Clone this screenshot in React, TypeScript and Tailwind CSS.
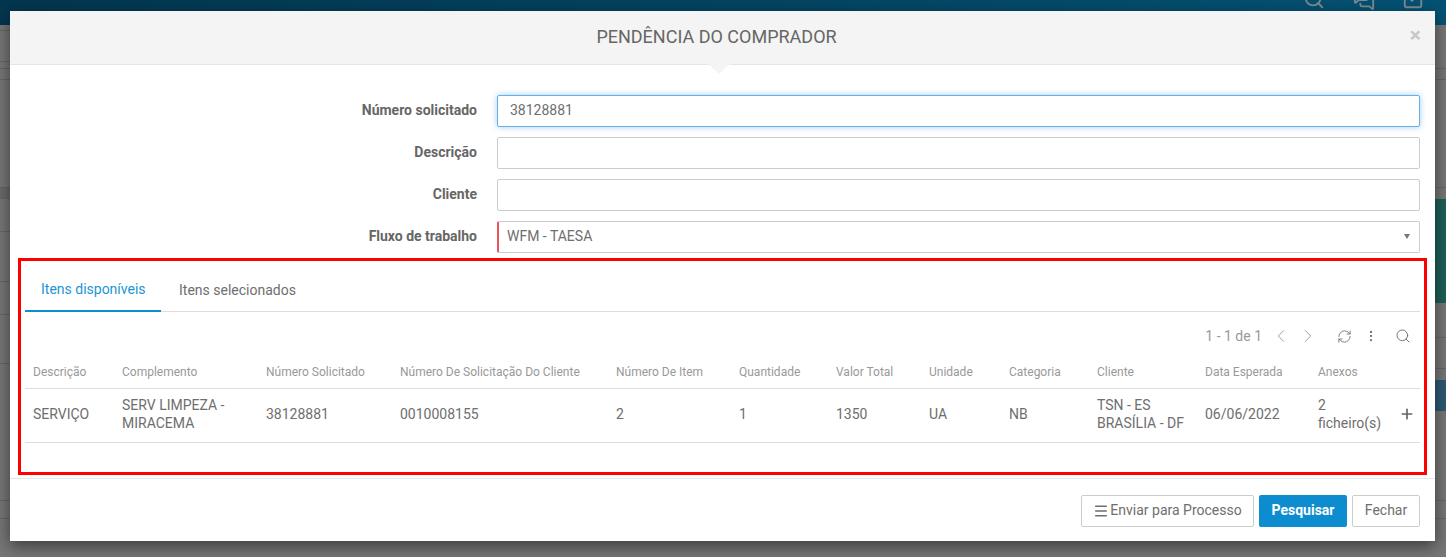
import { ChevronLeft, ChevronRight, Menu, MoreVertical, Plus, RefreshCw, Search, MessagesSquare, SquareCheck } from "lucide-react";

const columns = [
  { label: "Descrição", width: "w-[89px]" },
  { label: "Complemento", width: "w-[144px]" },
  { label: "Número Solicitado", width: "w-[134px]" },
  { label: "Número De Solicitação Do Cliente", width: "w-[216px]" },
  { label: "Número De Item", width: "w-[123px]" },
  { label: "Quantidade", width: "w-[97px]" },
  { label: "Valor Total", width: "w-[93px]" },
  { label: "Unidade", width: "w-[80px]" },
  { label: "Categoria", width: "w-[88px]" },
  { label: "Cliente", width: "w-[108px]" },
  { label: "Data Esperada", width: "w-[113px]" },
  { label: "Anexos", width: "w-[76px]" },
];

const row = [
  "SERVIÇO",
  "SERV LIMPEZA - MIRACEMA",
  "38128881",
  "0010008155",
  "2",
  "1",
  "1350",
  "UA",
  "NB",
  "TSN - ES BRASÍLIA - DF",
  "06/06/2022",
  "2 ficheiro(s)",
];

// page behind the modal, only the edges show
function Backdrop() {
  return (
    <div className="h-[557px] bg-[#767676] flex flex-col">
      <div className="h-[25px] shrink-0 bg-gradient-to-r from-[#03364f] to-[#055274] flex justify-end gap-[27px] pr-[22px] overflow-hidden text-[#7d8a90]">
        <Search className="w-[22px] h-[22px] -mt-[12px] mr-[1px]" strokeWidth={2} />
        <MessagesSquare className="w-[22px] h-[22px] -mt-[11px]" strokeWidth={2} />
        <SquareCheck className="w-[22px] h-[22px] -mt-[12px]" strokeWidth={2} />
      </div>
      <div className="flex-1 flex justify-between">
        <div className="w-[10px] flex flex-col">
          <div className="h-[6px] border-b border-[#666]" />
          <div className="h-[31px] border-b border-[#666]" />
          <div className="h-[7px] border-b border-[#666]" />
          <div className="h-[11px] border-b border-[#666]" />
          <div className="h-[108px] border-b border-[#666]" />
          <div className="h-[11px] bg-[#6a6a6a] border-b border-[#666]" />
          <div className="h-[33px] border-b border-[#666]" />
          <div className="h-[50px] border-b border-[#666]" />
          <div className="h-[33px] border-b border-[#666]" />
          <div className="h-[49px] border-b border-[#666]" />
          <div className="h-[137px] border-b border-[#666]" />
          <div className="h-[18px] border-b border-[#666]" />
        </div>
        <div className="w-[11px] flex flex-col">
          <div className="h-[44px] border-b border-[#666]" />
          <div className="h-[11px] border-b border-[#666]" />
          <div className="h-[108px] border-b border-[#666]" />
          <div className="h-[11px]" />
          <div className="h-[104px] bg-[#1e5f58]" />
          <div className="h-[35px] border-b border-[#666]" />
          <div className="h-[31px] border-b border-[#666]" />
          <div className="h-[11px]" />
          <div className="h-[31px] bg-[#2d5a73]" />
          <div className="h-[90px] border-b border-[#666]" />
          <div className="h-[18px] border-b border-[#666]" />
        </div>
      </div>
    </div>
  );
}

function FormRow({ label, children }: { label: string; children: React.ReactNode }) {
  return (
    <div className="flex items-center h-[32px]">
      <label className="w-[467px] text-right text-[14px] font-bold text-[#666] pb-[2px]">{label}</label>
      <div className="ml-[20px] w-[923px]">{children}</div>
    </div>
  );
}

export default function App() {
  return (
    <div className="relative h-[557px] overflow-hidden font-['Roboto',sans-serif]">
      <Backdrop />

      <div className="absolute left-[10px] top-[11px] w-[1425px] h-[530px] bg-white shadow-[0_5px_15px_rgba(0,0,0,0.5)] flex flex-col">
        {/* Header */}
        <div className="relative h-[54px] shrink-0 bg-[#f4f4f4] border-b border-[#e5e5e5] flex items-center justify-center">
          <h4 className="text-[18px] text-[#666] pb-[2px] pr-[12px]">PENDÊNCIA DO COMPRADOR</h4>
          <span className="absolute right-[14px] top-[14px] text-[21px] leading-[21px] font-bold text-[#c8c8c8]">×</span>
          <div className="absolute left-[698px] top-[53px] w-0 h-0 border-x-[11px] border-x-transparent border-t-[10px] border-t-[#f4f4f4]" />
        </div>

        {/* Form */}
        <div className="pt-[30px] flex flex-col gap-[10px]">
          <FormRow label="Número solicitado">
            <input
              defaultValue="38128881"
              className="w-full h-[32px] px-[12px] pb-[2px] text-[14px] text-[#6e6e6e] bg-white border border-[#66afe9] rounded-[2px] outline-none shadow-[0_0_6px_rgba(102,175,233,0.6)]"
            />
          </FormRow>
          <FormRow label="Descrição">
            <input className="w-full h-[32px] px-[12px] text-[14px] text-[#6e6e6e] bg-white border border-[#ccc] rounded-[2px] outline-none" />
          </FormRow>
          <FormRow label="Cliente">
            <input className="w-full h-[32px] px-[12px] text-[14px] text-[#6e6e6e] bg-white border border-[#ccc] rounded-[2px] outline-none" />
          </FormRow>
          <FormRow label="Fluxo de trabalho">
            <div className="h-[32px] pl-[8px] pr-[9px] pb-[2px] text-[14px] text-[#6e6e6e] bg-white border border-[#ccc] border-l-2 border-l-[#e9545a] rounded-[2px] flex items-center justify-between">
              <span>WFM - TAESA</span>
              <span className="w-0 h-0 border-x-[3.5px] border-x-transparent border-t-[5px] border-t-[#777]" />
            </div>
          </FormRow>
        </div>

        {/* Tabs and table, with the red frame drawn on the capture */}
        <div className="mt-[5px] ml-[8px] w-[1409px] h-[217px] shrink-0 border-[3px] border-[#ff0000] px-[4px]">
          <div className="h-[51px] border-b border-[#ddd] flex text-[14px]">
            <div className="w-[136px] h-[51px] border-b-2 border-[#0d8dd0] text-[#1c95d4] pl-[16px] pt-[19px] leading-[18px]">
              Itens disponíveis
            </div>
            <div className="pl-[18px] pt-[20px] leading-[18px] text-[#6e6e6e]">Itens selecionados</div>
          </div>

          <div className="h-[46px] pt-[2px] flex items-center justify-end text-[#999]">
            <span className="text-[14px] mr-[8px]">1 - 1 de 1</span>
            <ChevronLeft className="w-[22px] h-[22px] mr-[5px]" strokeWidth={1} />
            <ChevronRight className="w-[22px] h-[22px] mr-[18px]" strokeWidth={1} />
            <RefreshCw className="w-[15px] h-[15px] mr-[12px] text-[#777]" strokeWidth={1.5} />
            <MoreVertical className="w-[14px] h-[14px] mr-[17px] text-[#777]" strokeWidth={2} />
            <Search className="w-[16px] h-[16px] mr-[9px] text-[#777]" strokeWidth={1.5} />
          </div>

          <table className="w-full table-fixed border-collapse">
            <thead>
              <tr className="border-b border-[#ddd]">
                {columns.map((col) => (
                  <th key={col.label} className={`${col.width} h-[30px] pl-[8px] pb-[2px] text-left text-[12px] font-normal text-[#999] whitespace-nowrap`}>
                    {col.label}
                  </th>
                ))}
                <th />
              </tr>
            </thead>
            <tbody>
              <tr className="border-b border-[#ddd]">
                {row.map((cell, i) => (
                  <td key={i} className="h-[54px] pl-[8px] pr-[5px] pb-[2px] text-[14px] leading-[18px] text-[#6e6e6e]">
                    {cell}
                  </td>
                ))}
                <td className="text-[#666] pb-[2px]">
                  <Plus className="w-[16px] h-[16px] ml-[13px]" strokeWidth={2.5} />
                </td>
              </tr>
            </tbody>
          </table>
        </div>

        {/* Footer */}
        <div className="mt-[3px] flex-1 border-t border-[#e5e5e5] pt-[16px] pr-[15px] flex justify-end gap-[5px] text-[14px]">
          <button className="w-[173px] h-[32px] pb-[2px] border border-[#ccc] rounded-[2px] text-[#6e6e6e] flex items-center justify-center gap-[1px]">
            <Menu className="w-[16px] h-[16px] mt-[2px]" strokeWidth={2.25} />
            Enviar para Processo
          </button>
          <button className="w-[88px] h-[32px] pb-[2px] bg-[#0d8dd0] rounded-[2px] text-white font-bold">Pesquisar</button>
          <button className="w-[68px] h-[32px] pb-[2px] border border-[#ccc] rounded-[2px] text-[#6e6e6e]">Fechar</button>
        </div>
      </div>
    </div>
  );
}
